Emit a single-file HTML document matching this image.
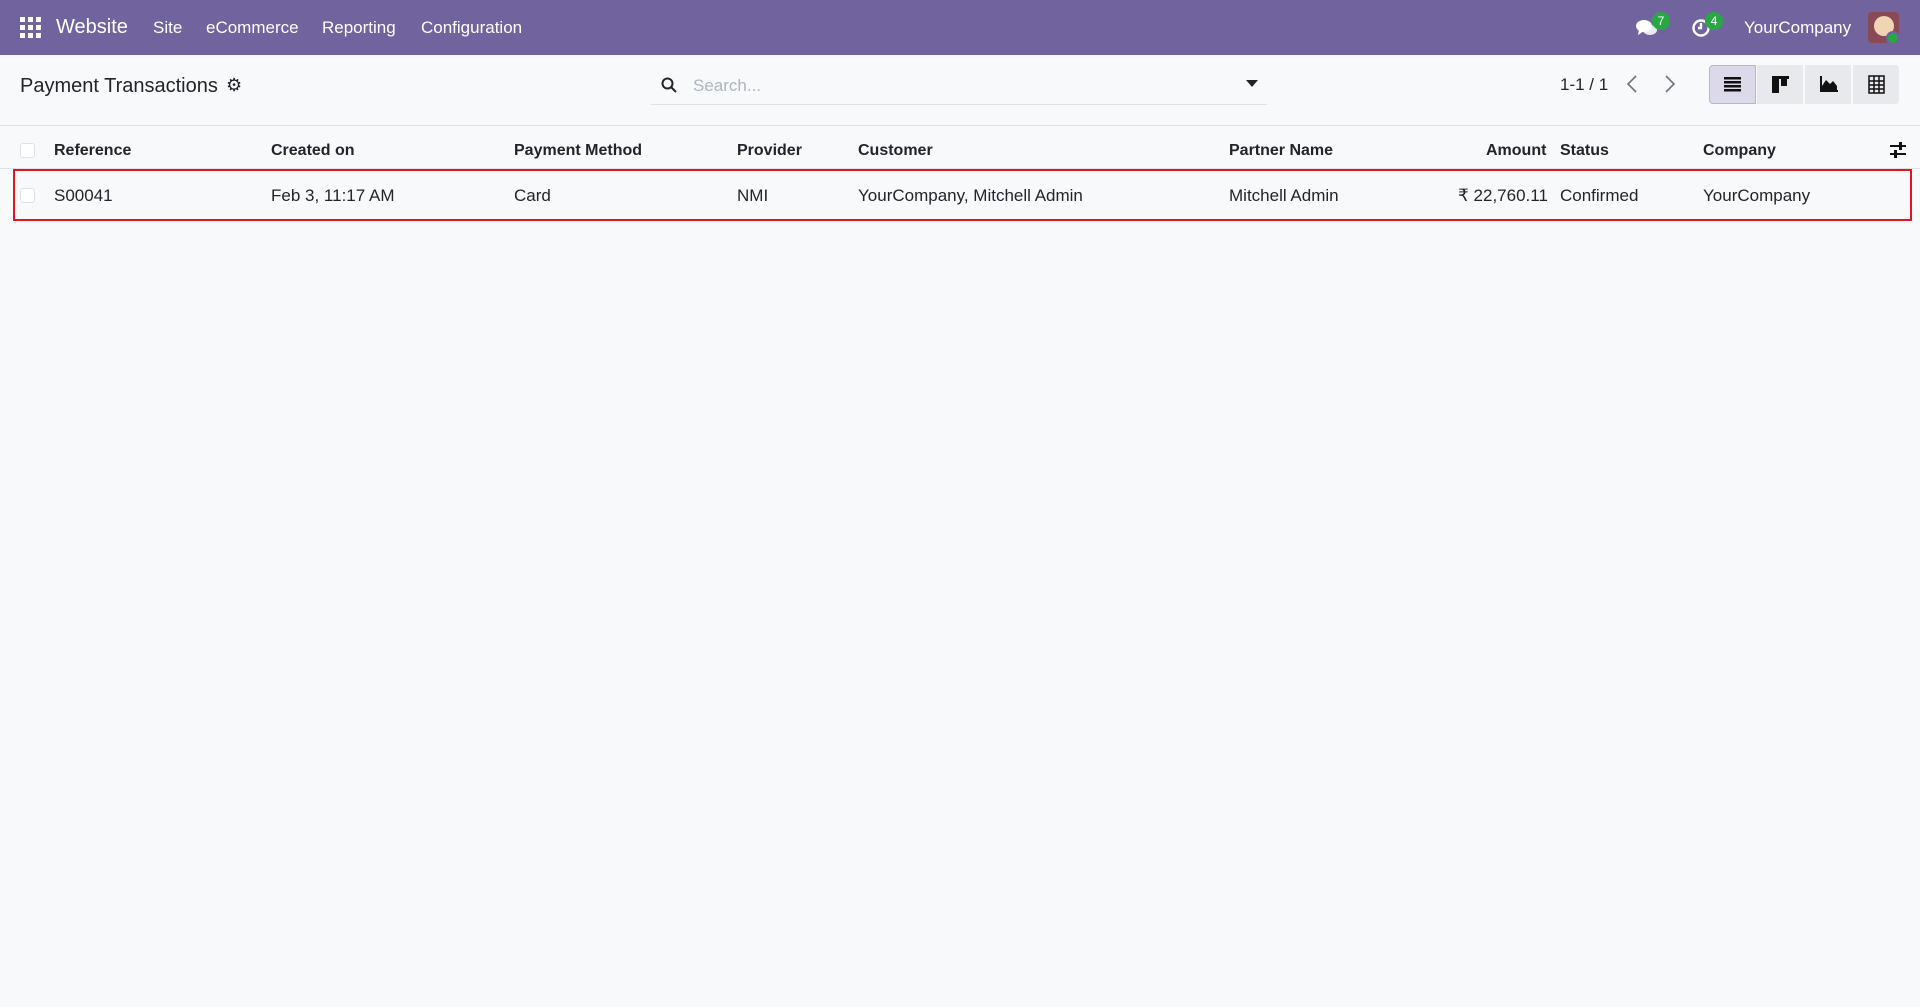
<!DOCTYPE html>
<html><head><meta charset="utf-8"><style>
*{box-sizing:border-box;margin:0;padding:0}
body{width:1920px;height:1007px;background:#f8f9fb;font-family:"Liberation Sans",sans-serif;color:#212529;position:relative;overflow:hidden}
.a{position:absolute;white-space:nowrap}
.nav{position:absolute;left:0;top:0;width:1920px;height:55px;background:#71639e}
.nav .a{color:#fff;font-size:17px;top:18px}
.h{font-weight:bold;font-size:16px;top:142px}
.r{font-size:17px;top:186px}
.badge{position:absolute;background:#28a745;color:#fff;border-radius:9px;font-size:12px;width:18px;height:18px;text-align:center;line-height:18px}
.vb{position:absolute;top:65px;width:47px;height:39px;background:#e7e9ed;border-right:1px solid #f8f9fb}
.cb{position:absolute;width:15px;height:15px;border:1px solid #dee2e6;border-radius:3px;background:#fff}
</style></head><body>
<div class="nav">
 <svg class="a" style="left:20px;top:17px" width="21" height="21" viewBox="0 0 21 21" fill="#fff">
  <rect x="0" y="0" width="5" height="5"/><rect x="8" y="0" width="5" height="5"/><rect x="16" y="0" width="5" height="5"/>
  <rect x="0" y="8" width="5" height="5"/><rect x="8" y="8" width="5" height="5"/><rect x="16" y="8" width="5" height="5"/>
  <rect x="0" y="16" width="5" height="5"/><rect x="8" y="16" width="5" height="5"/><rect x="16" y="16" width="5" height="5"/></svg>
 <div class="a" style="left:56px;top:16px;font-size:20px">Website</div>
 <div class="a" style="left:153px">Site</div>
 <div class="a" style="left:206px">eCommerce</div>
 <div class="a" style="left:322px">Reporting</div>
 <div class="a" style="left:421px">Configuration</div>
 <svg class="a" style="left:1636px;top:18px" width="22" height="20" viewBox="0 0 22 20" fill="#fff"><ellipse cx="8" cy="8" rx="8" ry="6"/><path d="M3 12 L2 17 L8 13Z"/><ellipse cx="14" cy="12" rx="7" ry="5" opacity=".85"/></svg>
 <div class="badge" style="left:1652px;top:12px">7</div>
 <svg class="a" style="left:1691px;top:18px" width="20" height="20" viewBox="0 0 20 20" fill="none" stroke="#fff" stroke-width="2.4"><circle cx="10" cy="10" r="7.5"/><path d="M10 5v5h-3"/></svg>
 <div class="badge" style="left:1705px;top:12px">4</div>
 <div class="a" style="left:1744px">YourCompany</div>
 <div class="a" style="left:1868px;top:12px;width:31px;height:31px;background:#8a4a55;border-radius:4px"></div>
 <div class="a" style="left:1874px;top:16px;width:20px;height:20px;background:#f1d3b5;border-radius:50%"></div>
 <div class="a" style="left:1886px;top:31px;width:14px;height:14px;background:#28a745;border-radius:50%;border:2px solid #71639e"></div>
</div>
<div class="a" style="left:20px;top:75px;font-size:20px">Payment Transactions</div>
<div class="a" style="left:226px;top:75px;font-size:18px">⚙</div>
<div class="a" style="left:651px;top:64px;width:616px;height:41px;border-bottom:1px solid #dee2e6"></div>
<svg class="a" style="left:661px;top:77px" width="16" height="16" viewBox="0 0 16 16" fill="none" stroke="#212529" stroke-width="2"><circle cx="6.5" cy="6.5" r="5"/><path d="M10 10l5 5"/></svg>
<div class="a" style="left:693px;top:76px;font-size:17px;color:#adb5bd">Search...</div>
<div class="a" style="left:1246px;top:80px;width:0;height:0;border-left:6px solid transparent;border-right:6px solid transparent;border-top:7px solid #212529"></div>
<div class="a" style="left:1560px;top:75px;font-size:17px">1-1 / 1</div>
<svg class="a" style="left:1626px;top:75px" width="12" height="18" viewBox="0 0 12 18" fill="none" stroke="#6c757d" stroke-width="1.6"><path d="M10 1L2 9l8 8"/></svg>
<svg class="a" style="left:1664px;top:75px" width="12" height="18" viewBox="0 0 12 18" fill="none" stroke="#6c757d" stroke-width="1.6"><path d="M2 1l8 8-8 8"/></svg>
<div class="vb" style="left:1709px;background:#dcd9ea;border:1px solid #b9b2d4;border-radius:4px 0 0 4px"></div>
<div class="vb" style="left:1757px"></div><div class="vb" style="left:1805px"></div><div class="vb" style="left:1853px;border-radius:0 4px 4px 0"></div>
<svg class="a" style="left:1724px;top:77px" width="17" height="15" fill="#111"><rect y="0" width="17" height="2.5"/><rect y="4" width="17" height="2.5"/><rect y="8" width="17" height="2.5"/><rect y="12" width="17" height="2.5"/></svg>
<svg class="a" style="left:1772px;top:76px" width="17" height="17" fill="#111"><rect width="17" height="3"/><rect y="3" width="7" height="14"/><rect x="9" y="3" width="6" height="7"/></svg>
<svg class="a" style="left:1819px;top:76px" width="19" height="17" fill="#111"><path d="M1 0v16h18v-2H3V0z"/><path d="M3 14V10l4-6 4 4 3-3 4 5v4z"/></svg>
<svg class="a" style="left:1868px;top:75px" width="17" height="19" fill="none" stroke="#111" stroke-width="1.5"><rect x="1" y="1" width="15" height="17"/><path d="M1 6h15M1 10h15M1 14h15M6 1v17M11 1v17"/></svg>
<div class="a" style="left:0;top:125px;width:1920px;height:1px;background:#dee2e6"></div>
<div class="cb" style="left:20px;top:143px"></div>
<div class="a h" style="left:54px">Reference</div>
<div class="a h" style="left:271px">Created on</div>
<div class="a h" style="left:514px">Payment Method</div>
<div class="a h" style="left:737px">Provider</div>
<div class="a h" style="left:858px">Customer</div>
<div class="a h" style="left:1229px">Partner Name</div>
<div class="a h" style="left:1486px">Amount</div>
<div class="a h" style="left:1560px">Status</div>
<div class="a h" style="left:1703px">Company</div>
<svg class="a" style="left:1890px;top:142px" width="16" height="16" fill="#111"><rect y="3" width="16" height="2"/><rect y="11" width="16" height="2"/><rect x="9" y="0" width="3" height="8"/><rect x="4" y="8" width="3" height="8"/></svg>
<div class="a" style="left:0;top:168px;width:1920px;height:1px;background:#dee2e6"></div>
<div class="a" style="left:13px;top:169px;width:1899px;height:52px;border:2px solid #e8141b"></div>
<div class="cb" style="left:20px;top:188px"></div>
<div class="a r" style="left:54px">S00041</div>
<div class="a r" style="left:271px">Feb 3, 11:17 AM</div>
<div class="a r" style="left:514px">Card</div>
<div class="a r" style="left:737px">NMI</div>
<div class="a r" style="left:858px">YourCompany, Mitchell Admin</div>
<div class="a r" style="left:1229px">Mitchell Admin</div>
<div class="a r" style="left:1458px">₹ 22,760.11</div>
<div class="a r" style="left:1560px">Confirmed</div>
<div class="a r" style="left:1703px">YourCompany</div>
</body></html>
